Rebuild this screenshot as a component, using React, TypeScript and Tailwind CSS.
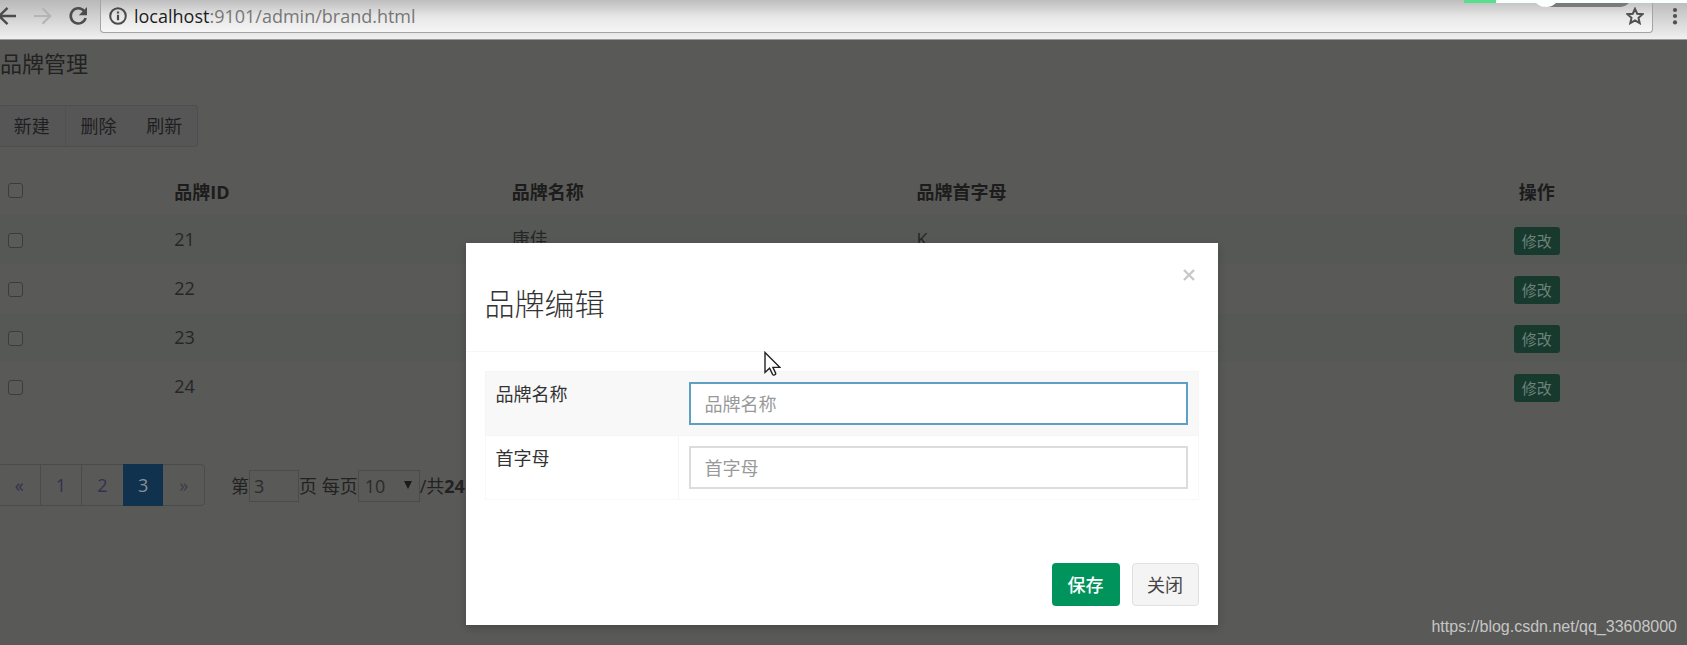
import React, { useState } from 'react';

const brands = [
  { id: 21, name: '康佳', letter: 'K' },
  { id: 22, name: '', letter: '' },
  { id: 23, name: '', letter: '' },
  { id: 24, name: '', letter: '' },
];

const checkbox =
  'block appearance-none w-[15px] h-[15px] rounded-[3px] border border-[#3c3c3c] bg-[#5a5a5a] checked:bg-[#222]';

function BrowserBar() {
  return (
    <header className="relative flex h-10 items-start border-b border-[#9b9b9b] bg-linear-to-b from-[#b9b9b9] to-[#f0f0f0]">
      <button aria-label="back" className="mt-1.5 -ml-1 w-5 text-[#4c4c4c]">
        <svg className="w-5 h-5" viewBox="0 0 20 20" fill="none" stroke="currentColor" strokeWidth="2.4">
          <path d="M20 10H3M11.5 1.8L3.3 10l8.2 8.2" />
        </svg>
      </button>
      <button aria-label="forward" className="mt-1.5 ml-4 w-5 text-[#b4b4b4]">
        <svg className="w-5 h-5" viewBox="0 0 20 20" fill="none" stroke="currentColor" strokeWidth="2.2">
          <path d="M2 10h16M10.5 2.3l7.7 7.7-7.7 7.7" />
        </svg>
      </button>
      <button aria-label="reload" className="mt-1.5 ml-4 w-5 text-[#4c4c4c]">
        <svg className="w-5 h-5" viewBox="0 0 20 20" fill="none" stroke="currentColor" strokeWidth="2.6">
          <path d="M16.3 5.2A7.6 7.6 0 1 0 17.6 12" />
          <path d="M19 1v8.2h-8.2z" fill="currentColor" stroke="none" />
        </svg>
      </button>
      <div className="ml-3 flex h-[33px] flex-1 items-center rounded-b border border-t-0 border-[#a4a4a4] bg-linear-to-b from-[#bdbdbd] via-[#e6e6e6] to-[#f6f6f6] px-2">
        <svg className="w-[18px] h-[18px] shrink-0" viewBox="0 0 18 18" fill="none" stroke="#4a4a4a" strokeWidth="2">
          <circle cx="9" cy="9" r="7.8" />
          <path d="M9 7.8v5.4M9 4.4v2" strokeWidth="2.2" />
        </svg>
        <div className="ml-[7px] flex-1 text-lg leading-6 text-[#777]">
          <span className="text-[#1c1c1c]">localhost</span>:9101/admin/brand.html
        </div>
        <svg className="w-[18px] h-[18px] shrink-0" viewBox="0 0 18 18" fill="none" stroke="#505050" strokeWidth="2">
          <path d="M9 1.8l2.2 4.9 5.3.5-4 3.6 1.2 5.3L9 13.3l-4.7 2.8 1.2-5.3-4-3.6 5.3-.5z" />
        </svg>
      </div>
      <button aria-label="menu" className="mt-1.5 ml-3 mr-0.5 w-5 text-[#505050]">
        <svg className="w-5 h-5" viewBox="0 0 20 20" fill="currentColor">
          <circle cx="10" cy="4" r="2.1" />
          <circle cx="10" cy="10" r="2.1" />
          <circle cx="10" cy="16.4" r="2.1" />
        </svg>
      </button>
      {/* edge of the floating recorder toolbar */}
      <svg className="absolute top-0 right-0 w-[223px] h-2" viewBox="0 0 223 8">
        <path d="M75 2h91c-3 3-6 5-12 5H80z" fill="#7a7a7a" />
        <path d="M71 2h22c-3 3-6 5-11 5s-8-2-11-5z" fill="#fff" />
        <path d="M32 0h191v3H32z" fill="#f8fffc" />
        <path d="M0 0h32v3H0z" fill="#57e08c" />
      </svg>
    </header>
  );
}

function BrandTable() {
  return (
    <table className="mt-6 w-full table-fixed border-collapse text-lg leading-6">
      <thead>
        <tr className="h-11 text-left align-top text-[#1c1c1c]">
          <th className="w-[9.8%] pt-3 pl-2">
            <input type="checkbox" aria-label="全选" className={checkbox} />
          </th>
          <th className="w-[20%] px-[9px] pt-[9px] font-bold">品牌ID</th>
          <th className="w-[24%] px-[9px] pt-[9px] font-bold">品牌名称</th>
          <th className="w-[28.4%] px-[9px] pt-[9px] font-bold">品牌首字母</th>
          <th className="px-[9px] pt-[9px] text-center font-bold">操作</th>
        </tr>
      </thead>
      <tbody>
        {brands.map((brand) => (
          <tr key={brand.id} className="h-[49px] align-top text-[#262626] odd:bg-[#565855]">
            <td className="pt-[18px] pl-2">
              <input type="checkbox" aria-label={`${brand.id}`} className={checkbox} />
            </td>
            <td className="px-[9px] pt-3">{brand.id}</td>
            <td className="px-[9px] pt-3">{brand.name}</td>
            <td className="px-[9px] pt-3">{brand.letter}</td>
            <td className="pt-3 text-center">
              <button className="mx-auto block h-7 w-[46px] rounded-[3px] bg-[#17392e] text-[15px] leading-7 text-[#6c8379]">
                修改
              </button>
            </td>
          </tr>
        ))}
      </tbody>
    </table>
  );
}

function Pagination() {
  return (
    <div className="mt-[53px] -ml-0.5 flex items-center text-lg leading-6 text-[#222]">
      <nav className="flex h-[42px] w-[207px] rounded border border-[#4b4b4c] text-[#32324f]">
        <a href="#prev" className="flex flex-1 items-center justify-center border-r border-[#4b4b4c]">«</a>
        <a href="#1" className="flex flex-1 items-center justify-center border-r border-[#4b4b4c]">1</a>
        <a href="#2" className="flex flex-1 items-center justify-center">2</a>
        <a href="#3" className="-my-px flex flex-1 items-center justify-center bg-[#10324f] text-[#8a8f94]">3</a>
        <a href="#next" className="flex flex-1 items-center justify-center text-[#3c3c46]">»</a>
      </nav>
      <div className="mt-0.5 ml-[26px] flex items-center">
        <label htmlFor="page">第</label>
        <input
          id="page"
          defaultValue="3"
          className="h-8 w-[50px] border border-[#4b4b4c] px-1 text-[#2b2b2b]"
        />
        <span>页&nbsp;</span>
        <label htmlFor="size">每页</label>
        <span className="relative flex">
          <select
            id="size"
            defaultValue="10"
            className="h-8 w-[62px] appearance-none border border-[#4b4b4c] pl-1.5 text-[#2b2b2b]"
          >
            <option>10</option>
            <option>20</option>
            <option>50</option>
          </select>
          <svg className="absolute top-2.5 right-2 h-2.5 w-2 pointer-events-none" viewBox="0 0 8 10" fill="#1a1a1a">
            <path d="M0 1h8L4 9z" />
          </svg>
        </span>
        <span>/共</span>
        <b>24</b>
      </div>
    </div>
  );
}

function BrandDialog() {
  const [name, setName] = useState('');
  const [letter, setLetter] = useState('');

  return (
    <div
      role="dialog"
      aria-labelledby="dialog-title"
      className="w-[752px] max-w-full bg-white pb-[19px] text-[#333] shadow-[0_3px_8px_rgba(0,0,0,0.2)]"
    >
      <div className="h-[109px] border-b border-[#f6f6f6] px-[19px] pt-5">
        <div className="flex justify-end">
          <button aria-label="关闭" className="flex h-6 w-5 items-center justify-center text-[#c8c8c8]">
            <svg className="w-3 h-3" viewBox="0 0 12 12" stroke="currentColor" strokeWidth="2.4">
              <path d="M1 1l10 10M11 1L1 11" />
            </svg>
          </button>
        </div>
        <h3 id="dialog-title" className="text-[30px] leading-[34px] font-light">品牌编辑</h3>
      </div>
      <div className="px-[19px] pt-[19px]">
        <div className="flex h-[65px] border border-[#f5f5f5] bg-[#f8f8f8]">
          <label htmlFor="brand-name" className="w-[193px] px-2.5 pt-2.5 text-lg leading-6">品牌名称</label>
          <div className="flex-1 p-2.5">
            <input
              id="brand-name"
              placeholder="品牌名称"
              value={name}
              onChange={(e) => setName(e.target.value)}
              className="h-[43px] w-full border-2 border-[#5f9fc4] bg-white px-3.5 text-lg placeholder:text-[#999] outline-none"
            />
          </div>
        </div>
        <div className="flex h-16 border border-t-0 border-[#f8f8f8]">
          <label htmlFor="brand-letter" className="w-[193px] border-r border-[#f5f5f5] px-2.5 pt-2.5 text-lg leading-6">首字母</label>
          <div className="flex-1 p-2.5">
            <input
              id="brand-letter"
              placeholder="首字母"
              value={letter}
              onChange={(e) => setLetter(e.target.value)}
              className="h-[43px] w-full border-2 border-[#dcdcdc] bg-white px-3.5 text-lg placeholder:text-[#999] outline-none"
            />
          </div>
        </div>
      </div>
      <div className="mt-[63px] flex justify-end gap-3 px-[19px] text-lg leading-6">
        <button className="h-[43px] w-[68px] rounded bg-[#00945c] font-medium text-white">保存</button>
        <button className="h-[43px] w-[67px] rounded border border-[#e0e0e0] bg-[#f4f4f4] text-[#444]">关闭</button>
      </div>
    </div>
  );
}

function App() {
  return (
    <div className="flex min-h-screen flex-col overflow-hidden bg-[#595957] font-['Open_Sans','Noto_Sans_CJK_SC',sans-serif]">
      <BrowserBar />
      <main className="relative flex-1">
        <h1 className="pt-[7px] text-[22px] leading-8 text-[#222]">品牌管理</h1>
        <div className="mt-[26px] -ml-0.5 flex h-[42px] w-[200px] rounded-[3px] border border-[#4e4e50] bg-[#565657] text-lg text-[#1f1f1f]">
          <button className="flex-1 border-r border-[#505052]">新建</button>
          <button className="flex-1">删除</button>
          <button className="flex-1">刷新</button>
        </div>
        <BrandTable />
        <Pagination />
        <div className="absolute inset-x-0 top-[203px] flex justify-center pr-1">
          <BrandDialog />
        </div>
        <svg className="absolute top-[311px] left-[764px] h-[26px] w-[17px]" viewBox="0 0 17 26" fill="#fff" stroke="#222" strokeWidth="1.4">
          <path d="M1 1.5v20l4.6-4.3 3 6.2c.8 1.4 3.6.4 3-1.3l-2.7-5.7H16z" />
        </svg>
        <div className="absolute right-2.5 bottom-1.5 font-['Liberation_Sans',sans-serif] text-base leading-6 text-[#c6c6c6]">
          https://blog.csdn.net/qq_33608000
        </div>
      </main>
    </div>
  );
}

export default App;
